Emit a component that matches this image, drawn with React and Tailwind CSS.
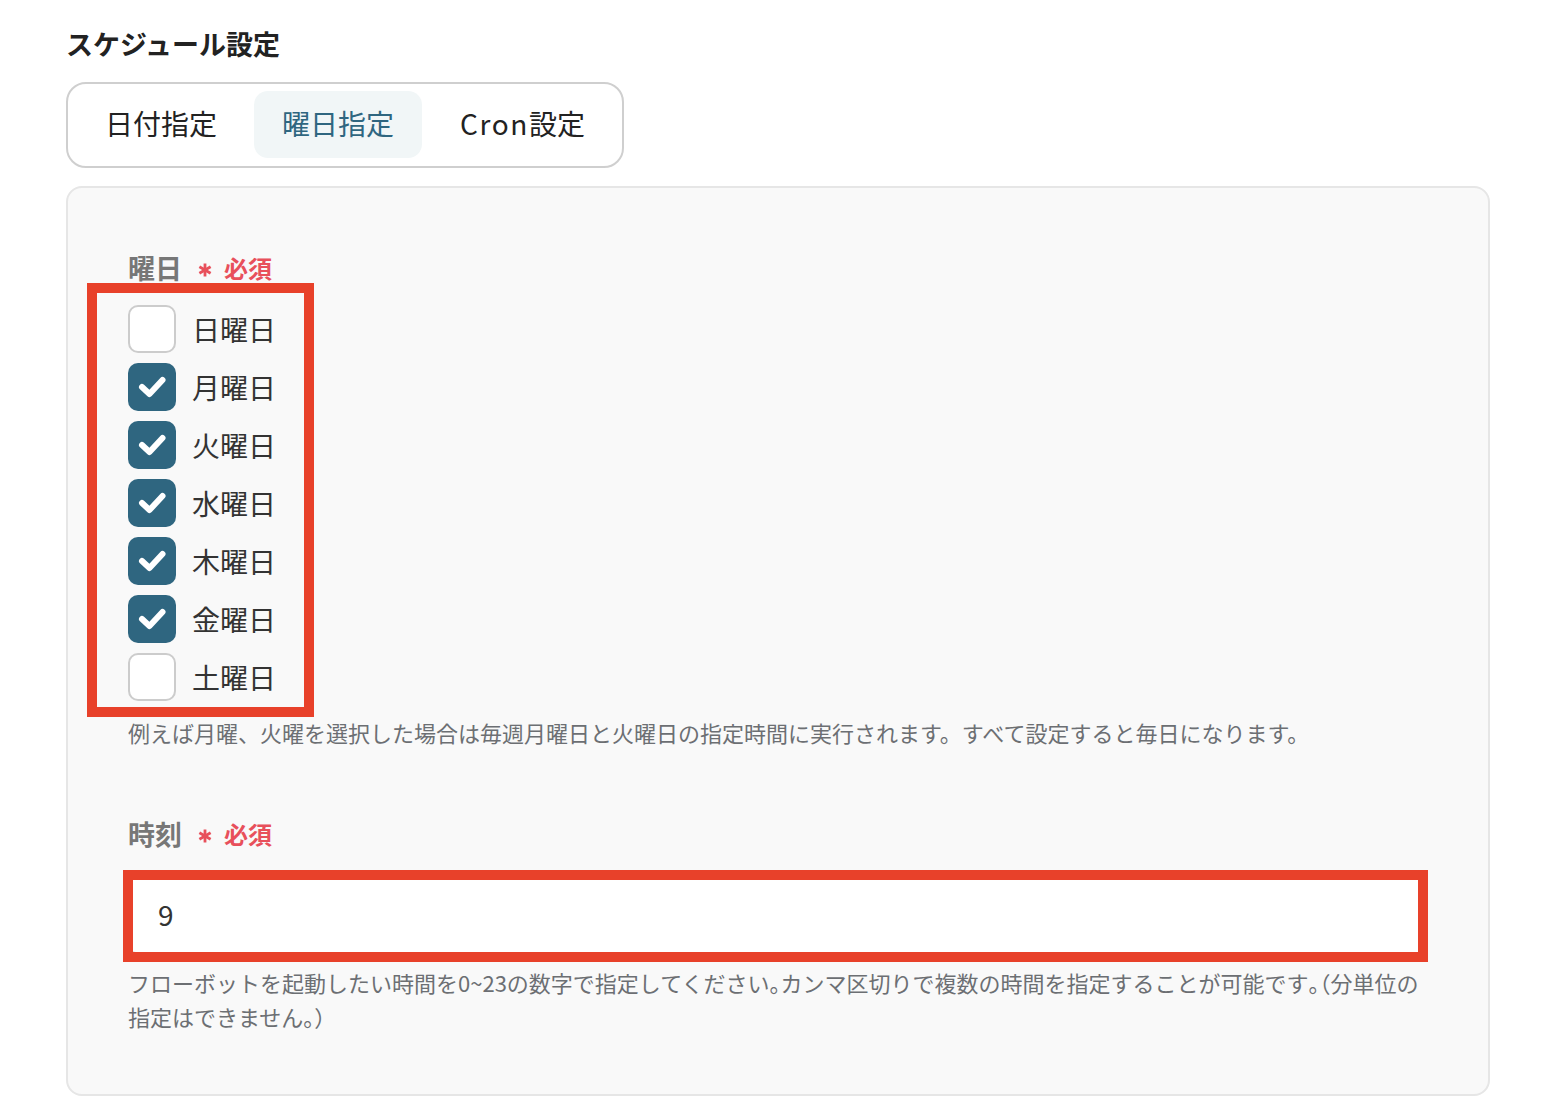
import React from "react";

const FONT = { fontFamily: '"Noto Sans CJK JP", "Noto Sans", sans-serif' };

const days = [
  { label: "日曜日", checked: false },
  { label: "月曜日", checked: true },
  { label: "火曜日", checked: true },
  { label: "水曜日", checked: true },
  { label: "木曜日", checked: true },
  { label: "金曜日", checked: true },
  { label: "土曜日", checked: false },
];

function CheckBox({ checked }) {
  if (checked) {
    return (
      <div className="w-[48px] h-[48px] rounded-[10px] bg-[#2f6680] flex items-center justify-center shrink-0">
        <svg width="48" height="48" viewBox="0 0 48 48" fill="none">
          <polyline
            points="14,24 21.5,31 34.5,17"
            stroke="#ffffff"
            strokeWidth="6"
            strokeLinecap="round"
            strokeLinejoin="round"
            fill="none"
          />
        </svg>
      </div>
    );
  }
  return (
    <div className="w-[48px] h-[48px] rounded-[10px] bg-white border-2 border-[#cccccc] shrink-0" />
  );
}

function Required() {
  return (
    <span className="flex items-center text-[#e8505b] font-semibold ml-[16px] leading-[36px]">
      <svg width="14" height="14" viewBox="0 0 14 14" className="mt-[3px]">
        <g stroke="#e8505b" strokeWidth="2.8" strokeLinecap="butt">
          <line x1="7" y1="0.5" x2="7" y2="13.5" />
          <line x1="1.4" y1="3.75" x2="12.6" y2="10.25" />
          <line x1="1.4" y1="10.25" x2="12.6" y2="3.75" />
        </g>
      </svg>
      <span className="text-[24px] ml-[12px]">必須</span>
    </span>
  );
}

const halt = "[font-feature-settings:'halt']";

export default function App() {
  return (
    <div className="min-h-[1108px] bg-white" style={FONT}>
      <div className="pl-[66px] w-[1490px] pt-6">
        <h1 className="text-[27px] font-bold text-[#222222] leading-[40px]">スケジュール設定</h1>

        <div className="mt-[18px] inline-flex items-center gap-[9px] border-2 border-[#cfcfcf] rounded-[20px] pt-[7px] pb-2 px-[9px]">
          <div className="h-[67px] px-7 pb-[3px] flex items-center rounded-[14px] text-[28px] text-[#222222]">日付指定</div>
          <div className="h-[67px] px-7 pb-[3px] flex items-center rounded-[14px] text-[28px] text-[#2f6680] bg-[#f1f6f7]">曜日指定</div>
          <div className="h-[67px] pl-[29px] pr-7 pb-[3px] flex items-center rounded-[14px] text-[28px] text-[#222222]">
            <span className="tracking-[1.6px]">Cron</span>
            <span>設定</span>
          </div>
        </div>

        <div className="mt-[18px] border-2 border-[#e6e6e6] bg-[#f9f9f9] rounded-[16px] pt-[62px] pb-[61px] px-[60px]">
          <div className="flex items-center">
            <span className="text-[27px] font-bold text-[#777777] leading-[36px]">曜日</span>
            <Required />
          </div>

          <div className="relative mt-[19px] flex flex-col gap-[10px]">
            {days.map((d) => (
              <div key={d.label} className="flex items-center h-[48px]">
                <CheckBox checked={d.checked} />
                <span className="ml-[16px] text-[28px] text-[#333333] leading-[48px]">{d.label}</span>
              </div>
            ))}
            <div className="absolute top-[-22px] left-[-41px] w-[227px] h-[434px] border-[10px] border-[#e8412a] pointer-events-none" />
          </div>

          <p className="mt-[14px] text-[22px] leading-[34px] text-[#6c6f73]">
            例えば月曜、火曜を選択した場合は毎週月曜日と火曜日の指定時間に実行されます。すべて設定すると毎日になります。
          </p>

          <div className="flex items-center mt-[67px]">
            <span className="text-[27px] font-bold text-[#777777] leading-[36px]">時刻</span>
            <Required />
          </div>

          <div className="relative mt-[22px] h-[80px] bg-white border-2 border-[#d8d8d8] rounded-[8px] flex items-center pl-[28px]">
            <span className="text-[28px] text-[#333333]">9</span>
            <div className="absolute top-[-6px] left-[-7px] right-[-2px] bottom-[-10px] border-[10px] border-[#e8412a] pointer-events-none" />
          </div>

          <p className="mt-[11px] text-[22px] leading-[34px] text-[#6c6f73]">
            フローボットを起動したい時間を0~23の数字で指定してください<span className={halt}>。</span>カンマ区切りで複数の時間を指定することが可能です<span className={halt}>。（</span>分単位の
            <br />
            指定はできません<span className={halt}>。）</span>
          </p>
        </div>
      </div>
    </div>
  );
}
